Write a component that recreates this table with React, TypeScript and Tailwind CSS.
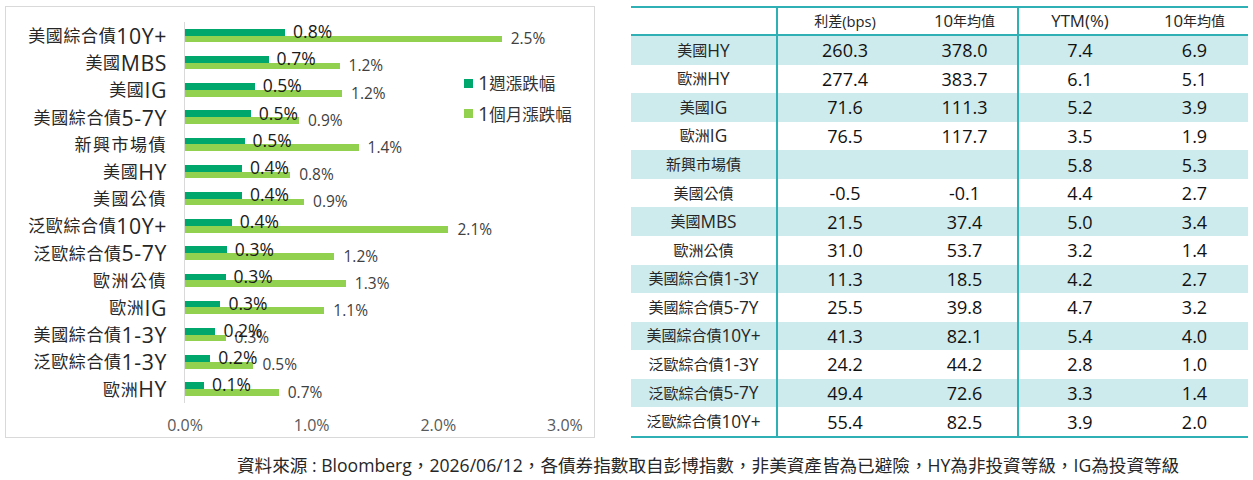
import React from "react";

type Bar = { name: string; week: number; weekLabel: string; month: number; monthLabel: string };

// bar values in %, 1% = 126.67px on the axis
const bars: Bar[] = [
  { name: "美國綜合債10Y+", week: 0.79, weekLabel: "0.8%", month: 2.5, monthLabel: "2.5%" },
  { name: "美國MBS", week: 0.66, weekLabel: "0.7%", month: 1.22, monthLabel: "1.2%" },
  { name: "美國IG", week: 0.55, weekLabel: "0.5%", month: 1.24, monthLabel: "1.2%" },
  { name: "美國綜合債5-7Y", week: 0.52, weekLabel: "0.5%", month: 0.9, monthLabel: "0.9%" },
  { name: "新興市場債", week: 0.47, weekLabel: "0.5%", month: 1.37, monthLabel: "1.4%" },
  { name: "美國HY", week: 0.45, weekLabel: "0.4%", month: 0.83, monthLabel: "0.8%" },
  { name: "美國公債", week: 0.45, weekLabel: "0.4%", month: 0.94, monthLabel: "0.9%" },
  { name: "泛歐綜合債10Y+", week: 0.37, weekLabel: "0.4%", month: 2.08, monthLabel: "2.1%" },
  { name: "泛歐綜合債5-7Y", week: 0.33, weekLabel: "0.3%", month: 1.18, monthLabel: "1.2%" },
  { name: "歐洲公債", week: 0.32, weekLabel: "0.3%", month: 1.27, monthLabel: "1.3%" },
  { name: "歐洲IG", week: 0.28, weekLabel: "0.3%", month: 1.1, monthLabel: "1.1%" },
  { name: "美國綜合債1-3Y", week: 0.24, weekLabel: "0.2%", month: 0.32, monthLabel: "0.3%" },
  { name: "泛歐綜合債1-3Y", week: 0.2, weekLabel: "0.2%", month: 0.54, monthLabel: "0.5%" },
  { name: "歐洲HY", week: 0.15, weekLabel: "0.1%", month: 0.74, monthLabel: "0.7%" },
];

const rows: string[][] = [
  ["美國HY", "260.3", "378.0", "7.4", "6.9"],
  ["歐洲HY", "277.4", "383.7", "6.1", "5.1"],
  ["美國IG", "71.6", "111.3", "5.2", "3.9"],
  ["歐洲IG", "76.5", "117.7", "3.5", "1.9"],
  ["新興市場債", "", "", "5.8", "5.3"],
  ["美國公債", "-0.5", "-0.1", "4.4", "2.7"],
  ["美國MBS", "21.5", "37.4", "5.0", "3.4"],
  ["歐洲公債", "31.0", "53.7", "3.2", "1.4"],
  ["美國綜合債1-3Y", "11.3", "18.5", "4.2", "2.7"],
  ["美國綜合債5-7Y", "25.5", "39.8", "4.7", "3.2"],
  ["美國綜合債10Y+", "41.3", "82.1", "5.4", "4.0"],
  ["泛歐綜合債1-3Y", "24.2", "44.2", "2.8", "1.0"],
  ["泛歐綜合債5-7Y", "49.4", "72.6", "3.3", "1.4"],
  ["泛歐綜合債10Y+", "55.4", "82.5", "3.9", "2.0"],
];

const PX = 126.67;

// latin runs are drawn larger than the CJK ones, like the original font does
function Mix({ text, big }: { text: string; big: string }) {
  const parts = text.split(/([\x20-\x7E]+)/).filter(Boolean);
  return (
    <>
      {parts.map((p, i) =>
        /^[\x20-\x7E]+$/.test(p) ? (
          <span key={i} className={big}>{p}</span>
        ) : (
          <span key={i}>{p}</span>
        )
      )}
    </>
  );
}

function Chart() {
  return (
    <div className="relative mt-[6px] ml-[5px] flex h-[432px] w-[590px] flex-col border border-[#d9d9d9]">
      <div className="flex pt-[15px]">
        <div className="flex w-[161px] flex-col">
          {bars.map((b) => (
            <div
              key={b.name}
              className={
                /[A-Z0-9]/.test(b.name)
                  ? "flex h-[27.2px] items-center justify-end whitespace-nowrap text-[17px] leading-none tracking-[0.6px] text-[#262626]"
                  : "flex h-[27.2px] items-center justify-end whitespace-nowrap text-[17px] leading-none tracking-[1.5px] text-[#262626]"
              }
            >
              <Mix text={b.name} big="text-[1.25em]" />
            </div>
          ))}
        </div>
        <div className="ml-[17px] flex w-[381px] flex-col border-l border-[#d9d9d9]">
          {bars.map((b) => (
            <div key={b.name} className="flex h-[27.2px] flex-col justify-center">
              <div className="flex h-[6.7px] items-center">
                <div className="h-full bg-[#00a76d]" style={{ width: b.week * PX }} />
                <span className="relative z-10 ml-[8px] -mt-[1px] whitespace-nowrap text-[17.5px] leading-none text-[#1a1a1a]">{b.weekLabel}</span>
              </div>
              <div className="flex h-[6.7px] items-center">
                <div className="h-full bg-[#92d050]" style={{ width: b.month * PX }} />
                <span className="ml-[9px] whitespace-nowrap text-[15.5px] leading-none text-[#404040]">{b.monthLabel}</span>
              </div>
            </div>
          ))}
        </div>
      </div>
      <div className="mt-[12px] ml-[159px] flex w-[420px] justify-between text-[16px] leading-[20px] text-[#595959]">
        {["0.0%", "1.0%", "2.0%", "3.0%"].map((t) => (
          <span key={t} className="w-[40px] text-center">{t}</span>
        ))}
      </div>
      <div className="absolute top-[61px] left-[458px] flex flex-col text-[16.5px] text-[#333333]">
        <div className="flex h-[30.5px] items-center">
          <span className="h-[9px] w-[9px] bg-[#00a76d]" />
          <span className="ml-[5px] leading-none"><Mix text="1週漲跌幅" big="text-[1.2em]" /></span>
        </div>
        <div className="flex h-[30.5px] items-center">
          <span className="h-[9px] w-[9px] bg-[#92d050]" />
          <span className="ml-[5px] leading-none"><Mix text="1個月漲跌幅" big="text-[1.2em]" /></span>
        </div>
      </div>
    </div>
  );
}

function Table() {
  const cell = "flex items-center justify-center whitespace-nowrap";
  const line = "border-r-2 border-[#2fb0b5]";
  const num = "text-[18px] leading-none font-medium text-[#111111]";
  return (
    <div className="mt-[6px] ml-[36px] w-[617px] border-t-2 border-b-2 border-[#2fb0b5]">
      <div className="grid h-[28px] grid-cols-[147px_134px_107px_122px_107px] border-b-2 border-[#2fb0b5] text-[14px] leading-none text-[#262626]">
        <div className={`${cell} ${line}`} />
        <div className={cell}><Mix text="利差(bps)" big="text-[1.05em]" /></div>
        <div className={`${cell} ${line}`}><Mix text="10年均值" big="text-[1.2em]" /></div>
        <div className={cell}><Mix text="YTM(%)" big="text-[1.2em]" /></div>
        <div className={cell}><Mix text="10年均值" big="text-[1.2em]" /></div>
      </div>
      {rows.map((r, i) => (
        <div
          key={r[0]}
          className={
            i % 2 === 0
              ? "grid h-[28.57px] grid-cols-[147px_134px_107px_122px_107px] bg-[#cdeaed]"
              : "grid h-[28.57px] grid-cols-[147px_134px_107px_122px_107px] bg-white"
          }
        >
          <div className={`${cell} ${line} text-[15px] leading-none text-[#262626]`}>
            <Mix text={r[0]} big="text-[1.15em]" />
          </div>
          <div className={`${cell} ${num}`}>{r[1]}</div>
          <div className={`${cell} ${line} ${num}`}>{r[2]}</div>
          <div className={`${cell} ${num}`}>{r[3]}</div>
          <div className={`${cell} ${num}`}>{r[4]}</div>
        </div>
      ))}
    </div>
  );
}

export default function App() {
  return (
    <div className="h-[480px] w-[1253px] overflow-hidden bg-white font-['Open_Sans','Noto_Sans_CJK_TC',sans-serif]">
      <div className="flex items-start">
        <Chart />
        <Table />
      </div>
      <div className="mt-[17px] pl-[237px] text-[17.6px] leading-[20px] whitespace-nowrap text-[#262626]">
        <Mix
          text="資料來源 : Bloomberg，2026/06/12，各債券指數取自彭博指數，非美資產皆為已避險，HY為非投資等級，IG為投資等級"
          big="text-[1em]"
        />
      </div>
    </div>
  );
}
